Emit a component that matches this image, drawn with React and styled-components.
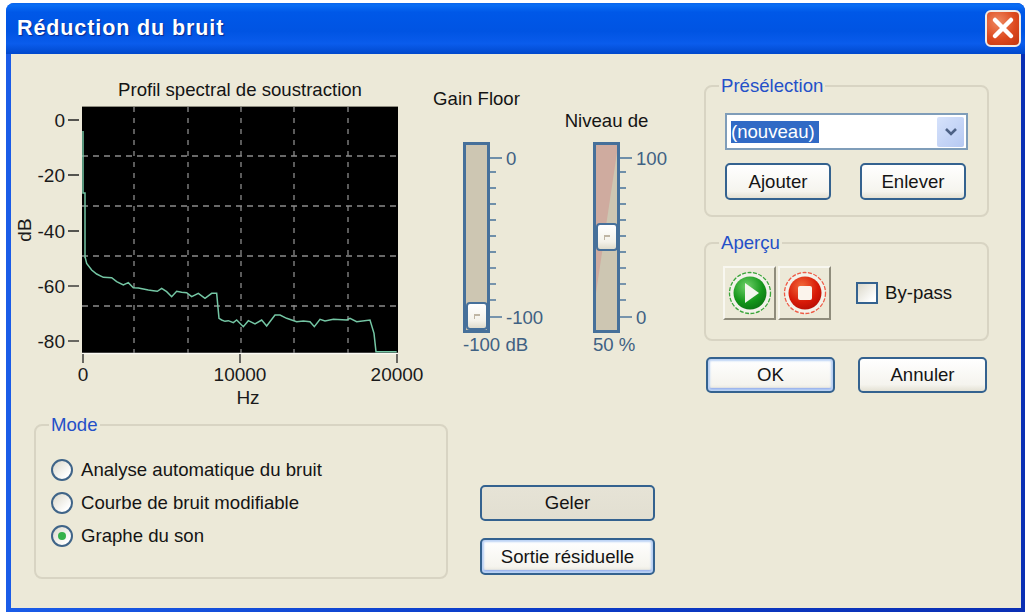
import React from "react";
import styled, { createGlobalStyle } from "styled-components";

const Global = createGlobalStyle`
  html, body { margin: 0; padding: 0; background: #fff; overflow: hidden; }
  body { font-family: "Liberation Sans", Arial, sans-serif; font-size: 18.6px; color: #141414; }
`;

const Win = styled.div`
  width: 1019px; height: 609px; margin: 3px 4px 0 6px;
  display: flex; flex-direction: column;
  background: linear-gradient(90deg, #1a5ce8 0, #0b3cc8 50%, #0a2fb4 100%);
  border-radius: 8px 8px 0 0; overflow: hidden;
`;

const TitleBar = styled.div`
  height: 51px; flex: none; display: flex; align-items: center; justify-content: space-between;
  padding: 0 4px 0 11px;
  background: linear-gradient(#0a64ea 0, #0a6ef5 4%, #0058e8 18%, #0054e3 55%, #0a5cec 80%, #0048cc 100%);
`;

const TitleText = styled.div`
  color: #fff; font-weight: bold; font-size: 21.5px; letter-spacing: 0.9px;
  text-shadow: 1px 1px 1px #0a2a90;
`;

const CloseBtn = styled.div`
  width: 36px; height: 37px; box-sizing: border-box; margin-top: -1px;
  display: flex; align-items: center; justify-content: center;
  border: 2px solid #f2ece6; border-radius: 6px;
  background: radial-gradient(circle at 35% 30%, #ef8a62, #dd4a1f 55%, #c13510);
`;

const Client = styled.div`
  flex: 1; display: flex; margin: 0 4px 4px 5px;
  background: #ece9d8; min-height: 0;
`;

const LeftCol = styled.div`
  width: 436px; flex: none; display: flex; flex-direction: column;
`;

const ChartTitle = styled.div`
  height: 46px; box-sizing: border-box; padding: 25px 0 0 22px; line-height: 22px;
  text-align: center; white-space: nowrap;
`;

const ChartSvg = styled.svg`
  display: block; flex: none;
  text { font-family: "Liberation Sans", Arial, sans-serif; font-size: 19px; fill: #1a1a1a; }
`;

const Group = styled.div`
  position: relative; box-sizing: border-box; height: ${(p) => p.$h}px;
  padding: ${(p) => p.$pad};
  border: 2px solid #d8d4c3; border-radius: 8px;
`;

const Legend = styled.span`
  position: absolute; left: 13px; top: -12px; padding: 0 2px; line-height: 22px;
  background: #ece9d8; color: #2450c8; white-space: nowrap;
`;

const ModeGroup = styled(Group)`
  margin: 8px 0 0 23px; width: 414px;
  display: flex; flex-direction: column; gap: 11px;
`;

const RadioRow = styled.label`
  display: flex; align-items: center; gap: 8px; height: 22px; white-space: nowrap;
`;

const RadioDot = styled.span`
  width: 22px; height: 22px; box-sizing: border-box; flex: none;
  display: flex; align-items: center; justify-content: center;
  border: 2px solid #3f6488; border-radius: 50%;
  background: linear-gradient(135deg, #dcd9cb, #fff 80%);
  &::after {
    content: ""; width: 8px; height: 8px; border-radius: 50%;
    background: ${(p) => (p.$on ? "#35b24a" : "transparent")};
  }
`;

const MiddleCol = styled.div`
  width: 241px; padding-left: 16px; flex: none; display: flex; flex-direction: column;
`;

const SliderRow = styled.div`
  display: flex;
`;

const SliderCol = styled.div`
  width: 130px; flex: none;
`;

const SliderTitle = styled.div`
  width: 27px; height: 88px; box-sizing: border-box; padding-top: ${(p) => p.$top}px;
  display: flex; justify-content: center; white-space: nowrap; line-height: 20px;
`;

const SliderBody = styled.div`
  display: flex; height: 191px;
`;

const Track = styled.div`
  position: relative; width: 27px; height: 191px; box-sizing: border-box; flex: none;
  border: 3px solid #46709a; background: #cdc6b2;
  &::before {
    content: ""; position: absolute; inset: 0;
    display: ${(p) => (p.$wedge ? "block" : "none")};
    background: #cfab9f;
    clip-path: polygon(0 0, 100% 0, 100% 4%, 0 80%);
  }
`;

const Thumb = styled.div`
  position: absolute; left: 0; top: ${(p) => p.$top}px; width: 22px; height: 28px; box-sizing: border-box;
  border: 2px solid #46709a; border-radius: 4px;
  background: linear-gradient(#fff, #f4f2ea 70%, #dfdccd);
  &::after {
    content: ""; position: absolute; left: 6px; top: 10px; width: 5px; height: 3px;
    border-top: 2px solid #bfb5a4; border-left: 1px solid #bfb5a4;
  }
`;

const ScaleSvg = styled.svg`
  display: block; overflow: visible;
  text { font-family: "Liberation Sans", Arial, sans-serif; font-size: 18.6px; fill: #3f6183; }
`;

const SliderValue = styled.div`
  margin-top: 2px; line-height: 20px; color: #3f6183; white-space: nowrap;
`;

const WideButtons = styled.div`
  margin: 130px 0 0 17px; display: flex; flex-direction: column; gap: 17px;
`;

const Btn = styled.div`
  box-sizing: border-box; width: ${(p) => p.$w}px; height: ${(p) => p.$h || 37}px;
  display: flex; align-items: center; justify-content: center; white-space: nowrap;
  border: 2px solid #34628f; border-radius: 5px;
  background: ${(p) => (p.$flat
    ? "linear-gradient(#e6e3d6, #e2dfd1)"
    : "linear-gradient(#fff, #f5f4ee 80%, #e4e1d4)")};
  box-shadow: ${(p) => (p.$def ? "inset 0 0 2px 2px #bcd3f5, inset 0 -2px 1px 1px #8ba6ec" : "none")};
`;

const RightCol = styled.div`
  width: 285px; padding-top: 31px; flex: none; box-sizing: border-box;
`;

const Combo = styled.div`
  width: 243px; height: 37px; box-sizing: border-box; display: flex; align-items: center;
  justify-content: space-between; padding: 0 2px 0 4px;
  border: 2px solid #7f9db9; background: #fff;
`;

const ComboValue = styled.span`
  background: #316ac5; color: #fff; height: 22px; line-height: 22px; width: 88px; white-space: nowrap;
`;

const ComboArrow = styled.span`
  width: 27px; height: 30px; display: flex; align-items: center; justify-content: center;
  background: linear-gradient(135deg, #d6e2fb, #b6c9f2); border-radius: 2px;
`;

const PresetButtons = styled.div`
  display: flex; gap: 29px; margin-top: 13px;
`;

const PreviewGroup = styled(Group)`
  margin-top: 25px; display: flex; align-items: flex-start;
`;

const MediaBtn = styled.div`
  width: 53px; height: 54px; box-sizing: border-box; margin-right: 2px;
  display: flex; align-items: center; justify-content: center;
  background: #ece9d8;
  border: 2px solid; border-color: #f8f7f0 #8f8c7c #8f8c7c #f8f7f0;
`;

const CheckRow = styled.label`
  display: flex; align-items: center; gap: 7px; height: 54px; margin-left: 23px;
`;

const CheckBox = styled.span`
  width: 22px; height: 22px; box-sizing: border-box;
  border: 2px solid #34628f; background: linear-gradient(135deg, #dcd9cb, #fff 85%);
`;

const DialogButtons = styled.div`
  display: flex; gap: 23px; margin: 16px 0 0 2px;
`;

const Y_TICKS = [[0, 120], [-20, 175], [-40, 231], [-60, 286], [-80, 341]];
const GRID_X = [134, 188, 241, 294, 348];
const GRID_Y = [156, 206, 256, 306];

// traced from the curve, in px relative to (70,100) at 3x
const RAW = [[45,470],[50,490],[65,510],[80,522],[100,532],[125,533],[140,545],[160,555],[175,548],[190,563],[205,564],[220,567],[235,570],[250,572],[262,574],[275,565],[290,575],[305,590],[320,574],[335,577],[350,578],[365,590],[385,580],[405,595],[425,580],[440,580],[447,655],[455,660],[465,664],[475,662],[490,668],[500,660],[520,680],[535,662],[555,672],[575,660],[590,678],[615,645],[630,645],[650,655],[665,660],[680,665],[700,663],[720,665],[733,680],[750,658],[765,663],[790,658],[830,660],[840,655],[860,665],[900,660],[912,700],[918,755],[980,755]];
const CURVE = "83,131 83,193 85,193 85,258 " + RAW.map(([x, y]) => `${70 + x / 3},${100 + y / 3}`).join(" ");

const Chart = () => (
  <ChartSvg width="436" height="316" viewBox="11 100 436 316">
    <rect x="82" y="107" width="316" height="246" fill="#000" />
    <line x1="82" y1="106.5" x2="398" y2="106.5" stroke="#8f8d80" />
    <line x1="82" y1="353.5" x2="398" y2="353.5" stroke="#fbfaf4" strokeWidth="1.5" />
    {GRID_X.map((x) => (
      <line key={x} x1={x} y1="107" x2={x} y2="353" stroke="#8c8c8c" strokeWidth="1.3" strokeDasharray="5 6" />
    ))}
    {GRID_Y.map((y) => (
      <line key={y} x1="82" y1={y} x2="398" y2={y} stroke="#8c8c8c" strokeWidth="1.3" strokeDasharray="6 5" />
    ))}
    <polyline points={CURVE} fill="none" stroke="#74c6a4" strokeWidth="1.5" />
    {Y_TICKS.map(([v, y]) => (
      <g key={v}>
        <line x1="68" y1={y} x2="79" y2={y} stroke="#222" strokeWidth="1.3" />
        <text x="65" y={y + 7} textAnchor="end">{v}</text>
      </g>
    ))}
    <text transform="translate(31 230) rotate(-90)" textAnchor="middle">dB</text>
    {[83, 240, 397].map((x) => (
      <line key={x} x1={x} y1="354" x2={x} y2="363" stroke="#222" strokeWidth="1.3" />
    ))}
    <text x="83" y="381" textAnchor="middle">0</text>
    <text x="240" y="381" textAnchor="middle">10000</text>
    <text x="397" y="381" textAnchor="middle">20000</text>
    <text x="248" y="404" textAnchor="middle">Hz</text>
  </ChartSvg>
);

const SCALE_Y = [16, 30, 46, 62, 78, 94, 110, 126, 142, 158, 175];

const Scale = ({ top, bottom }) => (
  <ScaleSvg width="70" height="191" viewBox="0 0 70 191">
    {SCALE_Y.map((y, i) => (
      <line key={y} x1="0" y1={y} x2={i === 0 || i === 10 ? 12 : 6} y2={y} stroke="#46709a" strokeWidth="1.4" />
    ))}
    <text x="16" y="23">{top}</text>
    <text x="16" y="182">{bottom}</text>
  </ScaleSvg>
);

const Slider = ({ title, titleTop, thumbTop, wedge, top, bottom, value }) => (
  <SliderCol>
    <SliderTitle $top={titleTop}>{title}</SliderTitle>
    <SliderBody>
      <Track $wedge={wedge}>
        <Thumb $top={thumbTop} />
      </Track>
      <Scale top={top} bottom={bottom} />
    </SliderBody>
    <SliderValue>{value}</SliderValue>
  </SliderCol>
);

const MediaIcon = ({ ring, light, mid, dark, children, id }) => (
  <svg width="44" height="44" viewBox="0 0 44 44">
    <defs>
      <radialGradient id={id} cx="0.4" cy="0.3" r="0.8">
        <stop offset="0" stopColor={light} />
        <stop offset="0.6" stopColor={mid} />
        <stop offset="1" stopColor={dark} />
      </radialGradient>
    </defs>
    <circle cx="22" cy="22" r="20.5" fill="#f3f2ea" stroke={ring} strokeWidth="1.3" strokeDasharray="4 1.5" />
    <circle cx="22" cy="22" r="16.5" fill={`url(#${id})`} />
    {children}
  </svg>
);

export default function App() {
  return (
    <>
      <Global />
      <Win>
        <TitleBar>
          <TitleText>Réduction du bruit</TitleText>
          <CloseBtn>
            <svg width="24" height="24" viewBox="0 0 24 24">
              <path d="M4 4 L20 20 M20 4 L4 20" stroke="#fff" strokeWidth="4.5" strokeLinecap="round" />
            </svg>
          </CloseBtn>
        </TitleBar>
        <Client>
          <LeftCol>
            <ChartTitle>Profil spectral de soustraction</ChartTitle>
            <Chart />
            <ModeGroup $h={155} $pad="33px 0 0 15px">
              <Legend>Mode</Legend>
              <RadioRow><RadioDot />Analyse automatique du bruit</RadioRow>
              <RadioRow><RadioDot />Courbe de bruit modifiable</RadioRow>
              <RadioRow><RadioDot $on />Graphe du son</RadioRow>
            </ModeGroup>
          </LeftCol>
          <MiddleCol>
            <SliderRow>
              <Slider title="Gain Floor" titleTop={35} thumbTop={157} top="0" bottom="-100" value="-100 dB" />
              <Slider title="Niveau de" titleTop={57} thumbTop={78} wedge top="100" bottom="0" value="50 %" />
            </SliderRow>
            <WideButtons>
              <Btn $w={175} $h={36} $flat>Geler</Btn>
              <Btn $w={175} $def>Sortie résiduelle</Btn>
            </WideButtons>
          </MiddleCol>
          <RightCol>
            <Group $h={132} $pad="26px 0 0 19px">
              <Legend>Présélection</Legend>
              <Combo>
                <ComboValue>(nouveau)</ComboValue>
                <ComboArrow>
                  <svg width="14" height="10" viewBox="0 0 14 10">
                    <path d="M2 2 L7 7 L12 2" fill="none" stroke="#4d6185" strokeWidth="2.6" />
                  </svg>
                </ComboArrow>
              </Combo>
              <PresetButtons>
                <Btn $w={106}>Ajouter</Btn>
                <Btn $w={106}>Enlever</Btn>
              </PresetButtons>
            </Group>
            <PreviewGroup $h={99} $pad="22px 0 0 17px">
              <Legend>Aperçu</Legend>
              <MediaBtn>
                <MediaIcon id="playFill" ring="#3aa53a" light="#6fd06a" mid="#14961a" dark="#0b6e12">
                  <path d="M17 12 L31 22 L17 32 Z" fill="#f4f6ee" />
                </MediaIcon>
              </MediaBtn>
              <MediaBtn>
                <MediaIcon id="stopFill" ring="#ee5a45" light="#f26a3a" mid="#d81a08" dark="#b00c04">
                  <rect x="15" y="15" width="14" height="14" rx="2" fill="#fbf4ec" />
                </MediaIcon>
              </MediaBtn>
              <CheckRow><CheckBox />By-pass</CheckRow>
            </PreviewGroup>
            <DialogButtons>
              <Btn $w={129} $h={36} $def>OK</Btn>
              <Btn $w={129} $h={36}>Annuler</Btn>
            </DialogButtons>
          </RightCol>
        </Client>
      </Win>
    </>
  );
}
